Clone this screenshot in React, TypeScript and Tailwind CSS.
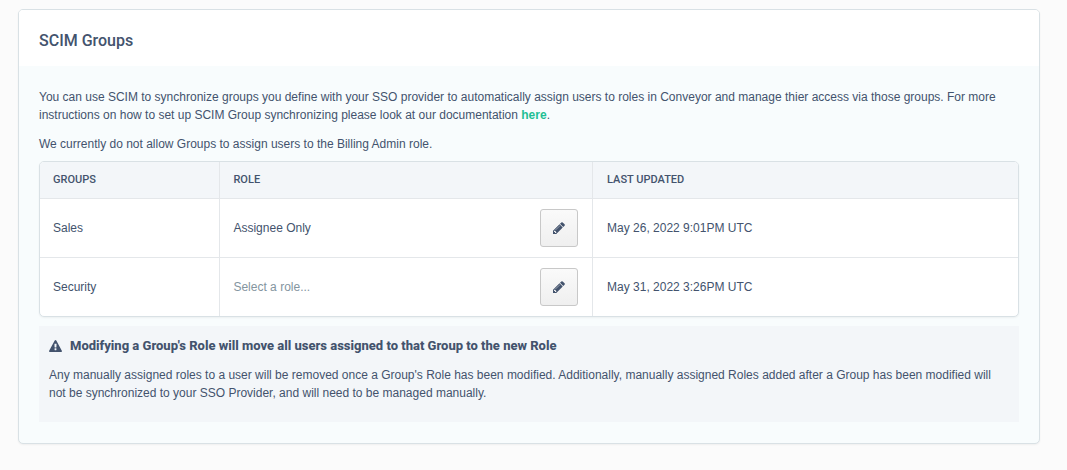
interface ScimGroup {
  name: string;
  role?: string;
  lastUpdated: string;
}

const groups: ScimGroup[] = [
  { name: "Sales", role: "Assignee Only", lastUpdated: "May 26, 2022 9:01PM UTC" },
  { name: "Security", lastUpdated: "May 31, 2022 3:26PM UTC" },
];

const PencilIcon = () => (
  <svg viewBox="0 0 1792 1792" className="size-[14px]" fill="currentColor" aria-hidden="true">
    <path d="M491 1536l91-91-235-235-91 91v107h128v128h107zm523-928q0-22-22-22-10 0-17 7l-542 542q-7 7-7 17 0 22 22 22 10 0 17-7l542-542q7-7 7-17zm-54-192l416 416-832 832h-416v-416zm683 96q0 53-37 90l-166 166-416-416 166-165q36-38 90-38 53 0 91 38l235 234q37 39 37 91z" />
  </svg>
);

const WarningIcon = () => (
  <svg viewBox="0 0 1792 1664" className="h-3 w-[13px]" fill="currentColor" aria-hidden="true">
    <path d="M1024 1375v-190q0-14-9.5-23.5t-22.5-9.5h-192q-13 0-22.5 9.5t-9.5 23.5v190q0 14 9.5 23.5t22.5 9.5h192q13 0 22.5-9.5t9.5-23.5zm-2-374l18-459q0-12-10-19-13-11-24-11h-220q-11 0-24 11-10 7-10 21l17 457q0 10 10 16.5t24 6.5h185q14 0 23.5-6.5t10.5-16.5zm-14-934l768 1408q35 63-2 126-17 29-46.5 46t-63.5 17h-1536q-34 0-63.5-17t-46.5-46q-37-63-2-126l768-1408q17-31 47-49t65-18 65 18 47 49z" />
  </svg>
);

function GroupRow({ name, role, lastUpdated }: ScimGroup) {
  return (
    <tr className="h-[59px] border-t border-[#e4e7ea]">
      <td className="px-[13px]">{name}</td>
      <td className="border-x border-[#e4e7ea] pr-[14px] pl-[13px]">
        <div className="flex items-center justify-between">
          <span className={role ? "" : "text-[#84959f]"}>{role ?? "Select a role..."}</span>
          <button
            type="button"
            aria-label={`Edit role for ${name}`}
            className="flex size-[38px] items-center justify-center rounded-[3px] border border-[#c8c8c8] bg-linear-to-b from-[#fafafa] to-[#efefef]"
          >
            <PencilIcon />
          </button>
        </div>
      </td>
      <td className="px-[14px]">{lastUpdated}</td>
    </tr>
  );
}

export default function App() {
  return (
    <div className="min-h-screen bg-[#fbfbfb] pt-[9px] pr-[27px] pb-[26px] pl-[18px] font-['Liberation_Sans',Arial,sans-serif] text-xs leading-[18px] text-[#43536d]">
      <section className="overflow-hidden rounded-[5px] border border-[#d9e1e5] bg-[#f8fcfd] shadow-xs">
        <header className="bg-white px-5 pt-[21px] pb-[15px]">
          <h1 className="font-[Roboto,Arial,sans-serif] text-base leading-5 font-medium">SCIM Groups</h1>
        </header>

        <div className="px-5 pt-[22px] pb-[21px]">
          <p className="mb-[11px]">
            You can use SCIM to synchronize groups you define with your SSO provider to automatically assign users to
            roles in Conveyor and manage thier access via those groups. For more instructions on how to set up SCIM
            Group synchronizing please look at our documentation{" "}
            <a href="#" className="font-bold text-[#1fbf94]">here</a>.
          </p>
          <p className="mb-2">We currently do not allow Groups to assign users to the Billing Admin role.</p>

          <div className="overflow-hidden rounded-[5px] border border-[#d9e1e5] bg-white shadow-xs">
            <table className="w-full table-fixed border-collapse text-left">
              <colgroup>
                <col className="w-[18.4%]" />
                <col className="w-[38.1%]" />
                <col />
              </colgroup>
              <thead>
                <tr className="h-9 bg-[#f3f6f9] font-[Roboto,Arial,sans-serif] text-[11px] uppercase">
                  <th className="px-[13px] font-medium">Groups</th>
                  <th className="border-x border-[#e4e7ea] px-[13px] font-medium">Role</th>
                  <th className="px-[14px] font-medium">Last Updated</th>
                </tr>
              </thead>
              <tbody>
                {groups.map((group) => (
                  <GroupRow key={group.name} {...group} />
                ))}
              </tbody>
            </table>
          </div>

          <div className="mt-[9px] bg-[#f3f6f9] px-[10px] pt-[11px] pb-5">
            <h2 className="mb-[11px] flex items-center gap-2 font-[Roboto,Arial,sans-serif] text-[13px] leading-[18px] font-extrabold">
              <WarningIcon />
              Modifying a Group's Role will move all users assigned to that Group to the new Role
            </h2>
            <p>
              Any manually assigned roles to a user will be removed once a Group's Role has been modified.
              Additionally, manually assigned Roles added after a Group has been modified will not be synchronized to
              your SSO Provider, and will need to be managed manually.
            </p>
          </div>
        </div>
      </section>
    </div>
  );
}
